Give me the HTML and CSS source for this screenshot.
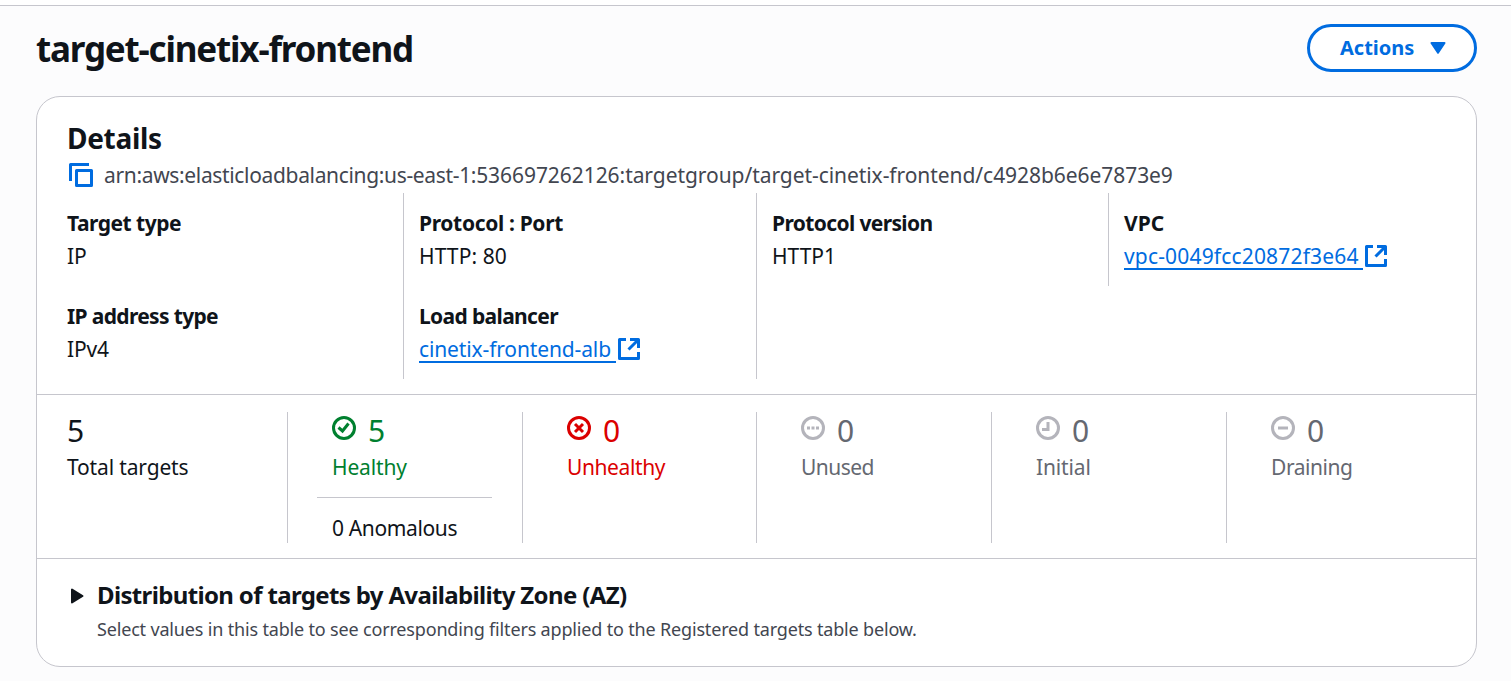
FILE: index.html
```html
<!DOCTYPE html>
<html lang="en">
<head>
<meta charset="utf-8">
<title>target-cinetix-frontend</title>
<link rel="stylesheet" href="styles.css">
</head>
<body>
<main class="page">
  <header class="page-header">
    <h1 class="page-title">target-cinetix-frontend</h1>
    <button class="actions" type="button">
      <span>Actions</span>
      <svg class="caret" width="16" height="12" viewBox="0 0 16 12"><path d="M1.500 1h13L8 10.800z" fill="currentColor" stroke="currentColor" stroke-width="2" stroke-linejoin="round"/></svg>
    </button>
  </header>

  <section class="card">
    <div class="details">
      <h2 class="details-title">Details</h2>
      <div class="arn">
        <svg class="copy-icon" width="24" height="24" viewBox="0 0 24 24" fill="none" stroke="currentColor" stroke-width="3" stroke-linejoin="round"><path d="M20 1.500H1.500V18"/><path d="M7.500 7.500h15v15h-15z"/></svg>
        <span class="arn-text"><span class="arn-service">arn:aws:elasticloadbalancing:us-east-1:</span>536697262126:targetgroup/target-cinetix-frontend/c4928b6e6e7873e9</span>
      </div>
      <div class="columns">
        <div class="column">
          <div class="field"><div class="label target-type">Target type</div><div class="value">IP</div></div>
          <div class="field"><div class="label address-type">IP address type</div><div class="value ipv4">IPv4</div></div>
        </div>
        <div class="column">
          <div class="field"><div class="label protocol-port">Protocol : Port</div><div class="value http-port">HTTP: 80</div></div>
          <div class="field"><div class="label load-balancer">Load balancer</div>
            <a class="link"><span class="link-text alb">cinetix-frontend-alb</span><svg class="external" width="22" height="22" viewBox="0 0 22 22" fill="none" stroke="currentColor" stroke-width="3" stroke-linejoin="round"><path d="M8 1.500H1.500v19h19V14"/><path d="M12 1.500h8.500V10M20 2l-9.500 9.500"/></svg></a>
          </div>
        </div>
        <div class="column">
          <div class="field"><div class="label protocol-version">Protocol version</div><div class="value">HTTP1</div></div>
        </div>
        <div class="column column-short">
          <div class="field"><div class="label">VPC</div>
            <a class="link"><span class="link-text vpc">vpc-0049fcc20872f3e64</span><svg class="external" width="22" height="22" viewBox="0 0 22 22" fill="none" stroke="currentColor" stroke-width="3" stroke-linejoin="round"><path d="M8 1.500H1.500v19h19V14"/><path d="M12 1.500h8.500V10M20 2l-9.500 9.500"/></svg></a>
          </div>
        </div>
      </div>
    </div>

    <div class="stats">
      <div class="stat stat-total">
        <div class="count">5</div>
        <div class="stat-name total">Total targets</div>
      </div>
      <div class="stat">
        <div class="stat-main healthy">
          <div class="count"><svg class="status" width="24" height="24" viewBox="0 0 24 24" fill="none" stroke="currentColor" stroke-width="3"><circle cx="12" cy="12" r="10.500"/><path d="M6.500 11.500l4 3.500 6-7.500"/></svg>5</div>
          <div class="stat-name">Healthy</div>
        </div>
        <div class="anomalous">0 Anomalous</div>
      </div>
      <div class="stat">
        <div class="stat-main unhealthy">
          <div class="count"><svg class="status" width="24" height="24" viewBox="0 0 24 24" fill="none" stroke="currentColor" stroke-width="3"><circle cx="12" cy="12" r="10.500"/><path d="M8 8l8 8M16 8l-8 8"/></svg>0</div>
          <div class="stat-name">Unhealthy</div>
        </div>
      </div>
      <div class="stat">
        <div class="stat-main muted">
          <div class="count"><svg class="status" width="24" height="24" viewBox="0 0 24 24" fill="none" stroke="currentColor" stroke-width="3"><circle cx="12" cy="12" r="10.500"/><path d="M6 12h3M10.500 12h3M15 12h3"/></svg>0</div>
          <div class="stat-name unused">Unused</div>
        </div>
      </div>
      <div class="stat">
        <div class="stat-main muted">
          <div class="count"><svg class="status" width="24" height="24" viewBox="0 0 24 24" fill="none" stroke="currentColor" stroke-width="3"><circle cx="12" cy="12" r="10.500"/><path d="M12 6v7.500H6"/></svg>0</div>
          <div class="stat-name">Initial</div>
        </div>
      </div>
      <div class="stat">
        <div class="stat-main muted">
          <div class="count"><svg class="status" width="24" height="24" viewBox="0 0 24 24" fill="none" stroke="currentColor" stroke-width="3"><circle cx="12" cy="12" r="10.500"/><path d="M7 12h10"/></svg>0</div>
          <div class="stat-name draining">Draining</div>
        </div>
      </div>
    </div>

    <div class="distribution">
      <svg class="expander" width="14" height="16" viewBox="0 0 14 16"><path d="M1 1.500v13L11.500 8z" fill="currentColor" stroke="currentColor" stroke-width="2" stroke-linejoin="round"/></svg>
      <div>
        <h3 class="distribution-title">Distribution of targets by Availability Zone (AZ)</h3>
        <p class="distribution-note">Select values in this table to see corresponding filters applied to the Registered targets table below.</p>
      </div>
    </div>
  </section>
</main>
</body>
</html>
```
FILE: styles.css
```css
* { box-sizing: border-box; }
body {
  margin: 0;
  padding-top: 5px;
  background: #fff;
  color: #0f141a;
  font: 21px/30px "Noto Sans", "Open Sans", sans-serif;
}
h1, h2, h3, p { margin: 0; }
svg { display: block; flex: none; }

.page {
  height: 676px;
  padding: 18px 34px 0 36px;
  border-top: 1px solid #c6c6cd;
  background: #fcfcfd;
}
.page-header {
  display: flex;
  justify-content: space-between;
  height: 72px;
}
.page-title {
  padding-top: 2px;
  font-size: 35px;
  font-weight: 700;
  line-height: 46px;
  letter-spacing: -1.18px;
}
.actions {
  display: flex;
  align-items: center;
  gap: 16px;
  width: 170px;
  height: 48px;
  padding: 0 0 0 30px;
  border: 3px solid #006ce0;
  border-radius: 24px;
  background: #fff;
  color: #006ce0;
  font: 700 20px/30px "Noto Sans", sans-serif;
}

.card {
  height: 571px;
  border: 1px solid #c6c6cd;
  border-radius: 24px;
  background: #fff;
}
.details {
  height: 298px;
  padding: 23px 15px 0;
  border-bottom: 1px solid #c6c6cd;
}
.details-title {
  padding-left: 15px;
  font-size: 28px;
  font-weight: 700;
  line-height: 36px;
  letter-spacing: -0.3px;
}
.arn {
  display: flex;
  gap: 11px;
  margin-top: 4px;
  padding-left: 17px;
  color: #424650;
}
.copy-icon { margin-top: 3px; color: #006ce0; }
.arn-text { letter-spacing: -0.06px; white-space: nowrap; }
.arn-service { letter-spacing: -0.34px; }

.columns {
  display: grid;
  grid-template-columns: 351px 353px 352px 352px;
  height: 186px;
  margin-top: 3px;
}
.column { padding-left: 15px; }
.column + .column { border-left: 1px solid #c6c6cd; }
.column-short { height: 93px; }
.field { height: 93px; padding-top: 15px; }
.label { font-weight: 700; line-height: 30px; }
.value, .link { margin-top: 3px; }
.target-type { letter-spacing: -0.5px; }
.address-type { letter-spacing: -0.65px; }
.protocol-port { letter-spacing: -0.34px; }
.load-balancer { letter-spacing: -0.64px; }
.protocol-version { letter-spacing: -0.63px; }
.http-port { letter-spacing: 0.1px; }
.ipv4 { letter-spacing: -0.2px; }
.link { display: flex; gap: 2px; color: #006ce0; }
.link-text { height: 29px; box-shadow: inset 0 -2px #006ce0; white-space: nowrap; }
.alb { width: 197px; letter-spacing: -0.13px; }
.vpc { width: 239px; letter-spacing: 0.17px; }
.external { margin-top: 4px; }

.stats {
  display: grid;
  grid-template-columns: 235px 235px 234px 235px 235px 235px;
  height: 164px;
  padding: 17px 15px 15px;
  border-bottom: 1px solid #c6c6cd;
}
.stat { height: 131px; padding: 0 30px 0 29px; }
.stat + .stat { border-left: 1px solid #c6c6cd; }
.stat-total { padding: 0 15px; }
.stat-main { height: 86px; padding-left: 15px; }
.count {
  display: flex;
  gap: 12px;
  height: 40px;
  padding-top: 1px;
  font-size: 30px;
  line-height: 36px;
}
.status { margin-top: 3px; }
.stat-name { letter-spacing: -0.15px; }
.healthy { border-bottom: 1px solid #c6c6cd; color: #00802f; }
.unhealthy { color: #db0000; }
.unhealthy .stat-name { letter-spacing: -0.4px; }
.muted { color: #656871; }
.muted .status { color: #b4b4bb; }
.unused { letter-spacing: -0.55px; }
.draining { letter-spacing: -0.45px; }
.anomalous { padding: 15px 0 0 15px; letter-spacing: -0.36px; white-space: nowrap; }

.distribution {
  display: flex;
  gap: 12px;
  padding: 21px 0 0 34px;
}
.expander { margin-top: 8px; }
.distribution-title {
  font-size: 24px;
  font-weight: 700;
  line-height: 30px;
  letter-spacing: -0.65px;
}
.distribution-note {
  margin-top: 7px;
  color: #424650;
  font-size: 18px;
  line-height: 24px;
  letter-spacing: -0.17px;
}
```
